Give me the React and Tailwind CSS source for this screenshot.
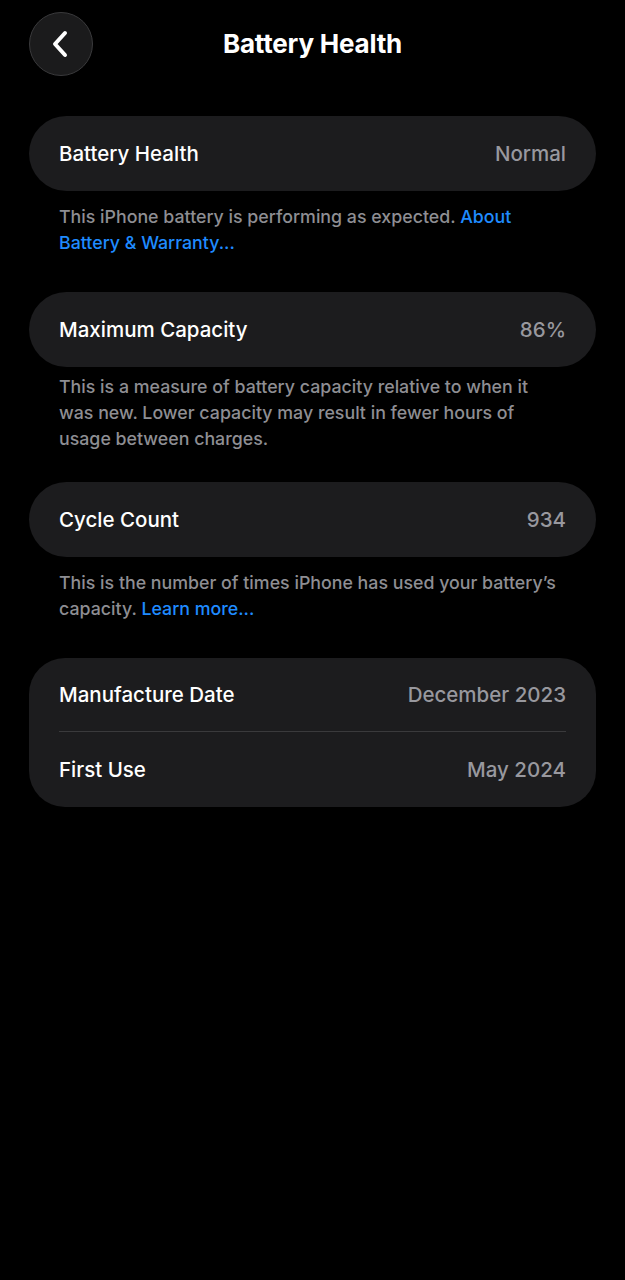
export default function App() {
  const row = 'flex items-center justify-between h-[75px] px-[30px] text-[20.5px] leading-[26px]';
  const note = 'px-[30px] text-[17.8px] leading-[26px] font-medium text-[#8e8e93]';

  return (
    <div
      className="min-h-[1280px] w-full bg-black text-white px-[29px]"
      style={{ fontFamily: 'Inter, "Noto Sans", sans-serif' }}
    >
      {/* Header */}
      <div className="relative flex items-center justify-center h-[88px]">
        <button className="absolute left-0 top-[12px] h-[64px] w-[64px] rounded-full bg-[#1b1b1c] border border-[#3a3a3c] flex items-center justify-center">
          <svg width="18" height="28" viewBox="0 0 18 28" fill="none" className="-ml-[2px]">
            <path d="M14 3 L4 14 L14 25" stroke="white" strokeWidth="4" strokeLinecap="round" strokeLinejoin="round" />
          </svg>
        </button>
        <h1 className="text-[26px] font-bold tracking-[-0.2px] -mt-[1px]">Battery Health</h1>
      </div>

      <div className="mt-[28px]">
        {/* Battery Health */}
        <div className={`${row} bg-[#1c1c1e] rounded-full`}>
          <span className="font-medium">Battery Health</span>
          <span className="text-[#98989e] font-medium">Normal</span>
        </div>
        <p className={`${note} pt-[13px]`}>
          This iPhone battery is performing as expected.{' '}
          <span className="text-[#1f8bff]">About Battery &amp; Warranty...</span>
        </p>

        {/* Maximum Capacity */}
        <div className={`${row} bg-[#1c1c1e] rounded-full mt-[36px]`}>
          <span className="font-medium">Maximum Capacity</span>
          <span className="text-[#98989e] font-medium">86%</span>
        </div>
        <p className={`${note} pt-[7px]`}>
          This is a measure of battery capacity relative to when it was new. Lower capacity may result in fewer hours of usage between charges.
        </p>

        {/* Cycle Count */}
        <div className={`${row} bg-[#1c1c1e] rounded-full mt-[30px]`}>
          <span className="font-medium">Cycle Count</span>
          <span className="text-[#98989e] font-medium">934</span>
        </div>
        <p className={`${note} pt-[13px]`}>
          This is the number of times iPhone has used your battery’s capacity.{' '}
          <span className="text-[#1f8bff]">Learn more...</span>
        </p>

        {/* Dates */}
        <div className="bg-[#1c1c1e] rounded-[36px] mt-[36px] px-[30px]">
          <div className="flex items-center justify-between h-[74px] text-[20.5px] leading-[26px] border-b border-[#3a3a3c]">
            <span className="font-medium">Manufacture Date</span>
            <span className="text-[#98989e] font-medium">December 2023</span>
          </div>
          <div className="flex items-center justify-between h-[75px] text-[20.5px] leading-[26px]">
            <span className="font-medium">First Use</span>
            <span className="text-[#98989e] font-medium">May 2024</span>
          </div>
        </div>
      </div>
    </div>
  );
}
